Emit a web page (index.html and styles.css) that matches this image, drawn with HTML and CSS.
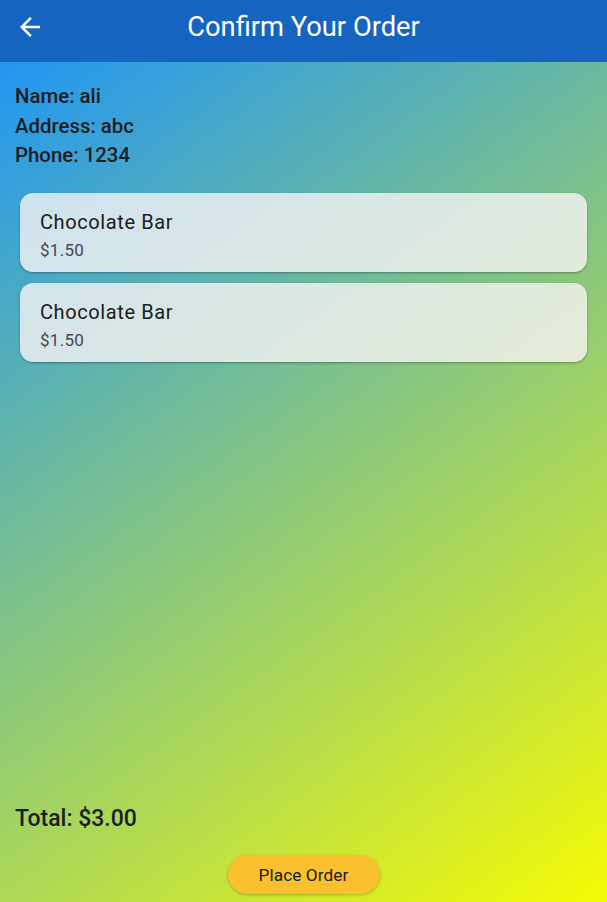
FILE: index.html
```html
<!DOCTYPE html>
<html lang="en">
<head>
<meta charset="utf-8">
<title>Confirm Your Order</title>
<link rel="stylesheet" href="styles.css">
</head>
<body>
<div class="app">
  <header class="appbar">
    <button class="back" aria-label="Back">
      <svg viewBox="0 0 24 24" width="30" height="30"><path fill="#fff" d="M20 11H7.83l5.59-5.59L12 4l-8 8 8 8 1.41-1.41L7.83 13H20v-2z"/></svg>
    </button>
    <h1 class="title">Confirm Your Order</h1>
  </header>
  <main class="content">
    <div class="info">
      <div>Name: ali</div>
      <div>Address: abc</div>
      <div>Phone: 1234</div>
    </div>
    <div class="items">
      <div class="card">
        <div class="item-name">Chocolate Bar</div>
        <div class="item-price">$1.50</div>
      </div>
      <div class="card">
        <div class="item-name">Chocolate Bar</div>
        <div class="item-price">$1.50</div>
      </div>
    </div>
    <div class="spacer"></div>
    <div class="total">Total: $3.00</div>
    <div class="actions">
      <button class="place">Place Order</button>
    </div>
  </main>
</div>
</body>
</html>
```
FILE: styles.css
```css
html, body {
  margin: 0;
  padding: 0;
}
body {
  font-family: Roboto, "Liberation Sans", sans-serif;
  width: 607px;
  height: 902px;
  overflow: hidden;
}
.app {
  display: flex;
  flex-direction: column;
  height: 902px;
}
.appbar {
  position: relative;
  height: 62px;
  flex: none;
  background: #1565C0;
  display: flex;
  align-items: center;
  justify-content: center;
}
.back {
  position: absolute;
  left: 15px;
  top: 12px;
  width: 30px;
  height: 30px;
  padding: 0;
  border: 0;
  background: none;
  display: block;
}
.back svg {
  display: block;
}
.title {
  margin: 0;
  color: #fff;
  font-size: 27.3px;
  font-weight: 400;
  line-height: 32px;
  padding-bottom: 8px;
}
.content {
  flex: 1;
  display: flex;
  flex-direction: column;
  padding: 20px 16px 8px 15px;
  background: linear-gradient(144.15deg, #2196F3 0%, #F6FA04 100%);
}
.info {
  font-size: 20.4px;
  font-weight: 500;
  line-height: 29.5px;
  color: #1d1d22;
}
.items {
  display: flex;
  flex-direction: column;
  gap: 11px;
  padding: 22px 4px 0 5px;
}
.card {
  height: 79px;
  box-sizing: border-box;
  padding: 15px 20px 0;
  border-radius: 13px;
  background: rgba(250, 245, 246, 0.78);
  box-shadow: 0 1px 2px rgba(0, 0, 0, 0.25), 0 1px 3px rgba(0, 0, 0, 0.1);
}
.item-name {
  font-size: 20px;
  letter-spacing: 0.6px;
  line-height: 28.8px;
  color: #1d1b20;
}
.item-price {
  font-size: 17px;
  letter-spacing: 0.3px;
  line-height: 24px;
  margin-top: 1.5px;
  color: #49454f;
}
.spacer {
  flex: 1;
}
.total {
  font-size: 23px;
  font-weight: 500;
  line-height: 26px;
  color: #1d1d22;
}
.actions {
  display: flex;
  justify-content: center;
  padding-top: 23.5px;
  padding-left: 1px;
}
.place {
  width: 152px;
  height: 39px;
  border: 0;
  border-radius: 20px;
  background: #FBC02D;
  color: #1d1b20;
  font-family: Roboto, "Liberation Sans", sans-serif;
  font-size: 17.2px;
  font-weight: 400;
  letter-spacing: 0.1px;
  box-shadow: 0 1px 3px rgba(0, 0, 0, 0.25);
  padding: 0;
}
```
